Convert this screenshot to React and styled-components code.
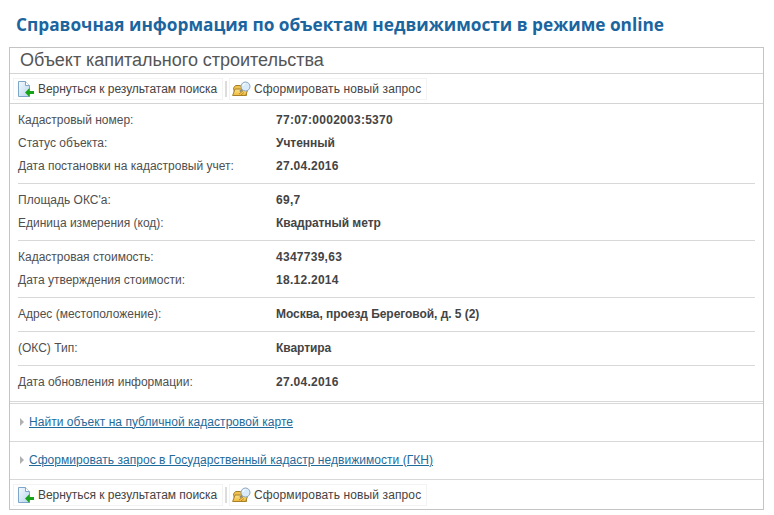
import React from 'react';
import styled, { createGlobalStyle } from 'styled-components';

const GlobalStyle = createGlobalStyle`
  html, body {
    margin: 0;
    padding: 0;
    background: #fff;
  }
  body {
    font-family: "Liberation Sans", Arial, sans-serif;
    font-size: 12px;
    color: #444;
  }
`;

const Page = styled.div`
  width: 774px;
  height: 515px;
  padding: 13px 10px 0 9px;
  box-sizing: border-box;
  overflow: hidden;
`;

const PageTitle = styled.h1`
  margin: 0 0 11px 7px;
  font-family: "Open Sans", sans-serif;
  font-size: 17.25px;
  line-height: 23px;
  font-weight: 700;
  color: #1b659f;
  white-space: nowrap;
`;

const Panel = styled.div`
  border: 1px solid #c4c4c4;
  height: 463px;
  box-sizing: border-box;
`;

const PanelTitle = styled.h2`
  margin: 0;
  padding: 0 0 0 10px;
  height: 26px;
  box-sizing: border-box;
  font-size: 18px;
  line-height: 24px;
  font-weight: 400;
  letter-spacing: -0.03px;
  color: #555;
  border-bottom: 1px solid #d4d4d4;
`;

const Toolbar = styled.div`
  display: flex;
  align-items: center;
  height: 30px;
  padding-left: 3px;
  box-sizing: border-box;
  border-top: ${(p) => (p.$bottom ? '1px solid #d8d8d8' : 'none')};
  border-bottom: ${(p) => (p.$bottom ? 'none' : '1px solid #d4d4d4')};
`;

const ToolButton = styled.a`
  display: flex;
  align-items: center;
  gap: ${(p) => p.$gap}px;
  height: 22px;
  width: ${(p) => p.$width}px;
  padding-left: ${(p) => p.$left}px;
  box-sizing: border-box;
  border: 1px solid #f3f3f3;
  color: #444;
  letter-spacing: ${(p) => p.$spacing || 0}px;
  white-space: nowrap;
`;

const ToolDivider = styled.span`
  width: 2px;
  height: 16px;
  margin: 0 2px;
  background: #dcdcdc;
`;

const Section = styled.div`
  margin: ${(p) => (p.$last ? '0' : '0 8px')};
  padding: ${(p) => (p.$last ? '5px 8px 7px' : '5px 0 5px')};
  border-bottom: 1px solid #d8d8d8;
`;

const Row = styled.div`
  display: grid;
  grid-template-columns: 258px 1fr;
  height: 23px;
  line-height: 23px;
`;

const Label = styled.span`
  color: #4f4f4f;
`;

const Value = styled.span`
  font-weight: 700;
  color: #444;
  letter-spacing: ${(p) => (p.$digits ? 0.27 : -0.05)}px;
`;

const LinkRow = styled.div`
  display: flex;
  align-items: center;
  gap: 5px;
  height: 38px;
  margin-top: ${(p) => (p.$first ? 1 : 0)}px;
  padding: 0 0 2px 10px;
  box-sizing: border-box;
  border-top: 1px solid #d8d8d8;
`;

const Arrow = styled.span`
  width: 0;
  height: 0;
  border-left: 4px solid #b0b0b0;
  border-top: 4px solid transparent;
  border-bottom: 4px solid transparent;
`;

const TextLink = styled.a`
  color: #1f6b9b;
  letter-spacing: 0.04px;
  text-decoration: underline;
`;

const BackIcon = () => (
  <svg width="16" height="16" viewBox="0 0 16 16">
    <defs>
      <linearGradient id="docFill" x1="0" y1="0" x2="1" y2="1">
        <stop offset="0" stopColor="#f4f9fd" />
        <stop offset="1" stopColor="#b9d6ef" />
      </linearGradient>
    </defs>
    <path d="M.5 .5h7l4 4v11h-11z" fill="url(#docFill)" stroke="#7ea6c8" />
    <path d="M7.500 .5v4h4" fill="#fff" stroke="#7ea6c8" />
    <path d="M7 11.500l4.500-4.500v3H16v3h-4.500v3z" fill="#18a418" />
  </svg>
);

const SearchFolderIcon = () => (
  <svg width="20" height="16" viewBox="0 0 20 16">
    <defs>
      <linearGradient id="folderFill" x1="0" y1="0" x2="0" y2="1">
        <stop offset="0" stopColor="#fbe38f" />
        <stop offset="1" stopColor="#f0b93a" />
      </linearGradient>
    </defs>
    <path d="M1.500 7l2-2.500h5l1 1.500h5v8.500H3z" fill="#efc250" stroke="#a8802a" />
    <path d="M.6 14.500l2.500-6.500h13l-2.500 6.500z" fill="url(#folderFill)" stroke="#a8802a" />
    <path d="M7 13l4-3M9 14l3-2.500" stroke="#b98a24" strokeWidth="1" />
    <path d="M8 10.500l2.500-2" stroke="#8f8a78" strokeWidth="2" />
    <circle cx="13.500" cy="5.500" r="4.500" fill="#d9eafa" stroke="#8aa4bc" />
    <path d="M11 5a2.500 2.500 0 0 1 2.500-2.500" fill="none" stroke="#fff" />
  </svg>
);

const Tools = ({ bottom }) => (
  <Toolbar $bottom={bottom}>
    <ToolButton $gap={4} $left={4} $width={210} $spacing={-0.03}>
      <BackIcon />
      Вернуться к результатам поиска
    </ToolButton>
    <ToolDivider />
    <ToolButton $gap={2} $left={2} $width={198} $spacing={0.12}>
      <SearchFolderIcon />
      Сформировать новый запрос
    </ToolButton>
  </Toolbar>
);

const sections = [
  [
    ['Кадастровый номер:', '77:07:0002003:5370'],
    ['Статус объекта:', 'Учтенный'],
    ['Дата постановки на кадастровый учет:', '27.04.2016'],
  ],
  [
    ["Площадь ОКС'а:", '69,7'],
    ['Единица измерения (код):', 'Квадратный метр'],
  ],
  [
    ['Кадастровая стоимость:', '4347739,63'],
    ['Дата утверждения стоимости:', '18.12.2014'],
  ],
  [['Адрес (местоположение):', 'Москва, проезд Береговой, д. 5 (2)']],
  [['(ОКС) Тип:', 'Квартира']],
  [['Дата обновления информации:', '27.04.2016']],
];

export default function App() {
  return (
    <Page>
      <GlobalStyle />
      <PageTitle>Справочная информация по объектам недвижимости в режиме online</PageTitle>
      <Panel>
        <PanelTitle>Объект капитального строительства</PanelTitle>
        <Tools />
        {sections.map((rows, i) => (
          <Section key={rows[0][0]} $last={i === sections.length - 1}>
            {rows.map(([label, value]) => (
              <Row key={label}>
                <Label>{label}</Label>
                <Value $digits={/^[\d:.,]+$/.test(value)}>{value}</Value>
              </Row>
            ))}
          </Section>
        ))}
        <LinkRow $first>
          <Arrow />
          <TextLink>Найти объект на публичной кадастровой карте</TextLink>
        </LinkRow>
        <LinkRow>
          <Arrow />
          <TextLink>Сформировать запрос в Государственный кадастр недвижимости (ГКН)</TextLink>
        </LinkRow>
        <Tools bottom />
      </Panel>
    </Page>
  );
}
